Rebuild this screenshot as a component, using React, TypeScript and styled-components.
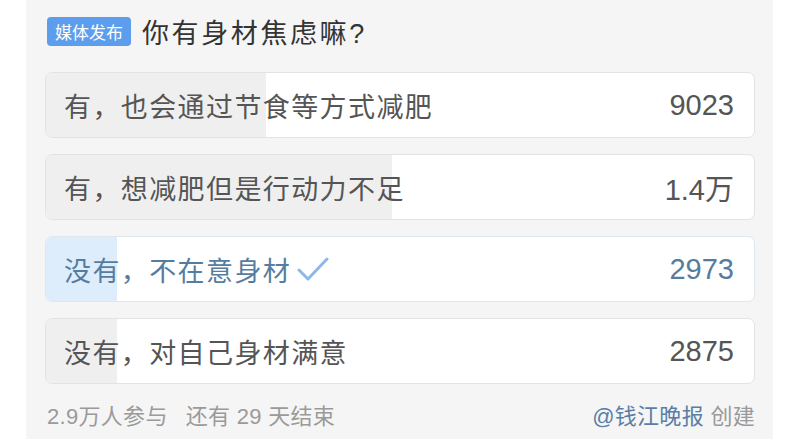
import styled, { createGlobalStyle } from "styled-components";

type Option = {
  label: string;
  count: string;
  percent: number;
  voted?: boolean;
};

const options: Array<Option> = [
  { label: "有，也会通过节食等方式减肥", count: "9023", percent: 31.1 },
  { label: "有，想减肥但是行动力不足", count: "1.4万", percent: 48.9 },
  { label: "没有，不在意身材", count: "2973", percent: 10, voted: true },
  { label: "没有，对自己身材满意", count: "2875", percent: 10 },
];

const GlobalStyle = createGlobalStyle`
  html, body {
    margin: 0;
    padding: 0;
    background: #ffffff;
  }

  body {
    font-family: "Liberation Sans", "Noto Sans CJK SC", sans-serif;
  }
`;

const Check = () => (
  <CheckIcon viewBox="0 0 32 26" aria-hidden>
    <path d="M2 14 L11 23 L30 3" />
  </CheckIcon>
);

export default function App() {
  return (
    <>
      <GlobalStyle />
      <Panel>
        <Header>
          <Tag>媒体发布</Tag>
          <Title>你有身材焦虑嘛?</Title>
        </Header>
        <OptionList>
          {options.map(({ label, count, percent, voted }) => (
            <OptionRow key={label} $voted={voted}>
              <Fill $voted={voted} style={{ width: `${percent}%` }} />
              <Label $voted={voted}>
                {label}
                {voted && <Check />}
              </Label>
              <Count $voted={voted}>{count}</Count>
            </OptionRow>
          ))}
        </OptionList>
        <Footer>
          <Stats>
            2.9万人参与<Spacer />还有 29 天结束
          </Stats>
          <Creator>
            <Author>@钱江晚报</Author> 创建
          </Creator>
        </Footer>
      </Panel>
    </>
  );
}

const Panel = styled.div`
  box-sizing: border-box;
  margin-left: 26px;
  width: 747px;
  height: 439px;
  padding: 17px 18px 0 19px;
  background: #f5f5f5;
  overflow: hidden;
`;

const Header = styled.div`
  display: flex;
  align-items: center;
  gap: 11px;
  padding-left: 2px;
  height: 29px;
`;

const Tag = styled.span`
  display: inline-flex;
  align-items: center;
  justify-content: center;
  height: 29px;
  padding: 0 8px;
  border-radius: 4px;
  background: #5c9ded;
  color: #ffffff;
  font-size: 17px;
`;

const Title = styled.h1`
  margin: 0;
  font-size: 27px;
  font-weight: 400;
  letter-spacing: 2.6px;
  color: #333333;
`;

const OptionList = styled.div`
  display: flex;
  flex-direction: column;
  gap: 16px;
  margin-top: 26px;
`;

const OptionRow = styled.div<{ $voted?: boolean }>`
  position: relative;
  box-sizing: border-box;
  display: flex;
  align-items: center;
  justify-content: space-between;
  height: 66px;
  padding: 0 20px 0 18px;
  border: 1px solid ${({ $voted }) => ($voted ? "#dfe6ee" : "#e3e3e3")};
  border-radius: 7px;
  background: #ffffff;
  overflow: hidden;
`;

const Fill = styled.div<{ $voted?: boolean }>`
  position: absolute;
  left: 0;
  top: 0;
  bottom: 0;
  background: ${({ $voted }) => ($voted ? "#deedfc" : "#efefef")};
`;

const Label = styled.span<{ $voted?: boolean }>`
  position: relative;
  display: flex;
  align-items: center;
  gap: 6px;
  font-size: 27px;
  letter-spacing: 1.4px;
  color: ${({ $voted }) => ($voted ? "#567c9f" : "#555555")};
`;

const Count = styled.span<{ $voted?: boolean }>`
  position: relative;
  font-size: 29px;
  color: ${({ $voted }) => ($voted ? "#567c9f" : "#555555")};
`;

const CheckIcon = styled.svg`
  width: 32px;
  height: 26px;
  fill: none;
  stroke: #8db8ea;
  stroke-width: 3;
  stroke-linecap: round;
  stroke-linejoin: round;
`;

const Footer = styled.div`
  display: flex;
  justify-content: space-between;
  align-items: center;
  margin-top: 18px;
  height: 24px;
  padding-left: 2px;
  font-size: 22px;
  letter-spacing: 0.3px;
  color: #9a9a9a;
`;

const Stats = styled.span`
  display: flex;
  align-items: center;
`;

const Spacer = styled.span`
  display: inline-block;
  width: 18px;
`;

const Creator = styled.span`
  white-space: pre;
`;

const Author = styled.span`
  color: #5a7ea8;
`;
